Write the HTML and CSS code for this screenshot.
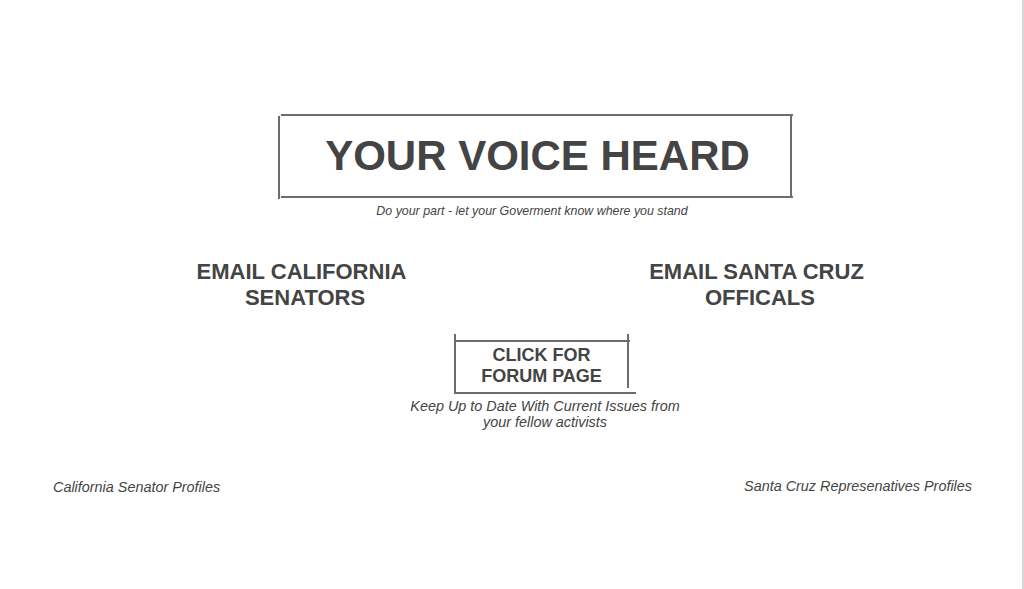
FILE: index.html
```html
<!DOCTYPE html>
<html lang="en">
<head>
<meta charset="utf-8">
<title>Your Voice Heard</title>
<link rel="stylesheet" href="styles.css">
</head>
<body>
<div class="page">
  <header class="hero">
    <div class="title-box">
      <h1 class="title">YOUR VOICE HEARD</h1>
    </div>
    <p class="tagline">Do your part - let your Goverment know where you stand</p>
  </header>

  <section class="emails">
    <div class="email-col"><h2 class="email-head">EMAIL CALIFORNIA<br><span class="email-line2">SENATORS</span></h2></div>
    <div class="email-col"><h2 class="email-head">EMAIL SANTA CRUZ<br><span class="email-line2">OFFICALS</span></h2></div>
  </section>

  <section class="forum">
    <a class="forum-btn" href="#"><span class="forum-text">CLICK FOR<br>FORUM PAGE</span><span class="forum-bottom"></span></a>
    <p class="forum-caption">Keep Up to Date With Current Issues from your fellow activists</p>
  </section>

  <footer class="profiles">
    <span class="profile-link">California Senator Profiles</span>
    <span class="profile-link profile-right">Santa Cruz Represenatives Profiles</span>
  </footer>
</div>
</body>
</html>
```

FILE: styles.css
```css
html, body {
  margin: 0;
  padding: 0;
  background: #ffffff;
}

body {
  font-family: "Liberation Sans", Arial, sans-serif;
  color: #444444;
}

.page {
  width: 1024px;
  height: 589px;
  box-sizing: border-box;
  border-right: 2px solid #d6d6d6;
  padding-top: 114px;
  overflow: hidden;
}

.hero {
  display: flex;
  flex-direction: column;
  align-items: flex-start;
  padding-left: 281px;
}

.title-box {
  position: relative;
  width: 512px;
  height: 80px;
  border-top: 2px solid #6c6c6c;
  border-bottom: 2px solid #6c6c6c;
  display: flex;
  align-items: center;
  justify-content: center;
}

.title-box::before {
  content: "";
  position: absolute;
  left: -3px;
  top: 0;
  width: 2px;
  height: 83px;
  background: #6c6c6c;
}

.title-box::after {
  content: "";
  position: absolute;
  right: 1px;
  top: -2px;
  width: 2px;
  height: 82px;
  background: #6c6c6c;
}

.title {
  margin: 0 0 0 1px;
  font-size: 42px;
  line-height: 1;
  font-weight: bold;
  color: #444444;
}

.tagline {
  width: 502px;
  margin: 6px 0 0 0;
  font-size: 12.4px;
  line-height: 14px;
  font-style: italic;
  text-align: center;
  color: #444444;
}

.emails {
  display: grid;
  grid-template-columns: 455px 455px;
  padding-left: 74px;
  margin-top: 41px;
}

.email-col {
  display: flex;
  justify-content: center;
}

.email-head {
  margin: 0;
  font-size: 22px;
  line-height: 26px;
  font-weight: bold;
  text-align: center;
  color: #444444;
}

.email-line2 {
  display: inline-block;
  padding-left: 7px;
}

.forum {
  width: 280px;
  margin: 29px 0 0 405px;
  display: flex;
  flex-direction: column;
  align-items: center;
}

.forum-btn {
  position: relative;
  display: block;
  width: 175px;
  height: 52px;
  margin-right: 5px;
  border-top: 2px solid #6c6c6c;
  text-decoration: none;
  color: #444444;
  text-align: center;
}

.forum-btn::before {
  content: "";
  position: absolute;
  left: -1px;
  top: -8px;
  width: 2px;
  height: 60px;
  background: #6c6c6c;
}

.forum-btn::after {
  content: "";
  position: absolute;
  right: 1px;
  top: -8px;
  width: 2px;
  height: 54px;
  background: #6c6c6c;
}

.forum-bottom {
  position: absolute;
  left: 1px;
  bottom: 0;
  width: 180px;
  height: 2px;
  background: #6c6c6c;
}

.forum-text {
  display: block;
  padding-top: 3px;
  padding-right: 2px;
  font-size: 18px;
  line-height: 21px;
  font-weight: bold;
}

.forum-caption {
  margin: 4px 0 0 0;
  font-size: 14.4px;
  line-height: 16px;
  font-style: italic;
  text-align: center;
  color: #444444;
}

.profiles {
  display: flex;
  justify-content: space-between;
  align-items: flex-start;
  padding: 0 50px 0 53px;
  margin-top: 49px;
}

.profile-link {
  font-size: 14.4px;
  line-height: 16px;
  font-style: italic;
  color: #444444;
}

.profile-right {
  margin-top: -1px;
}
```
